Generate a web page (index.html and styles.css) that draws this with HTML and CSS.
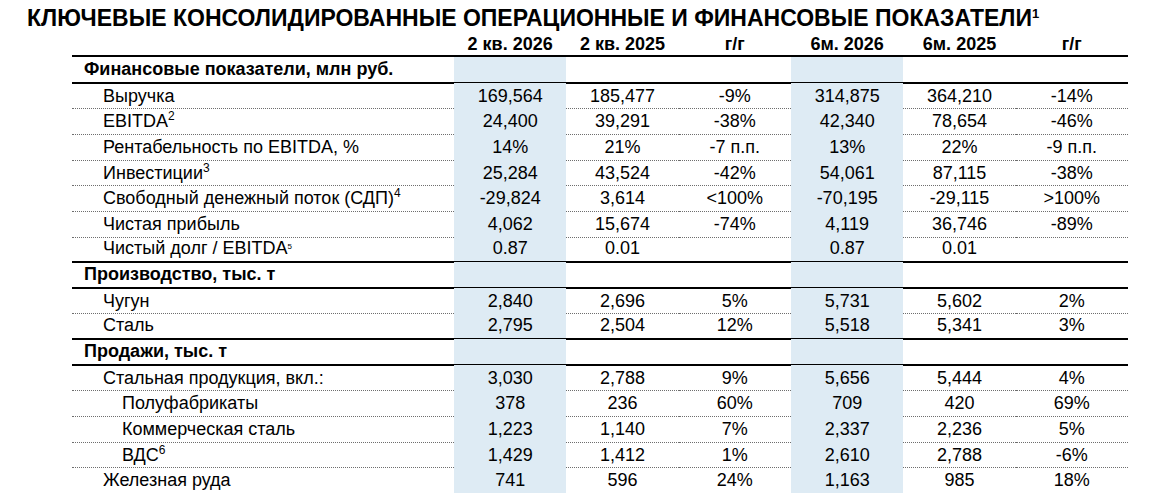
FILE: index.html
```html
<!DOCTYPE html>
<html lang="ru">
<head>
<meta charset="utf-8">
<title>Ключевые показатели</title>
<link rel="stylesheet" href="styles.css">
</head>
<body>
<div class="page">
  <h1 class="title">КЛЮЧЕВЫЕ КОНСОЛИДИРОВАННЫЕ ОПЕРАЦИОННЫЕ И ФИНАНСОВЫЕ ПОКАЗАТЕЛИ<sup class="tsup">1</sup></h1>
  <div class="table">
    <div class="row head">
      <div class="c lab"></div>
      <div class="c">2 кв. 2026</div>
      <div class="c">2 кв. 2025</div>
      <div class="c">г/г</div>
      <div class="c">6м. 2026</div>
      <div class="c">6м. 2025</div>
      <div class="c">г/г</div>
    </div>

    <div class="row sec thick">
      <div class="c lab">Финансовые показатели, млн руб.</div>
      <div class="c hl"></div><div class="c"></div><div class="c"></div>
      <div class="c hl"></div><div class="c"></div><div class="c"></div>
    </div>
    <div class="row">
      <div class="c lab l1">Выручка</div>
      <div class="c hl">169,564</div><div class="c">185,477</div><div class="c">-9%</div>
      <div class="c hl">314,875</div><div class="c">364,210</div><div class="c">-14%</div>
    </div>
    <div class="row">
      <div class="c lab l1">EBITDA<sup>2</sup></div>
      <div class="c hl">24,400</div><div class="c">39,291</div><div class="c">-38%</div>
      <div class="c hl">42,340</div><div class="c">78,654</div><div class="c">-46%</div>
    </div>
    <div class="row">
      <div class="c lab l1">Рентабельность по EBITDA, %</div>
      <div class="c hl">14%</div><div class="c">21%</div><div class="c">-7 п.п.</div>
      <div class="c hl">13%</div><div class="c">22%</div><div class="c">-9 п.п.</div>
    </div>
    <div class="row">
      <div class="c lab l1">Инвестиции<sup>3</sup></div>
      <div class="c hl">25,284</div><div class="c">43,524</div><div class="c">-42%</div>
      <div class="c hl">54,061</div><div class="c">87,115</div><div class="c">-38%</div>
    </div>
    <div class="row">
      <div class="c lab l1">Свободный денежный поток (СДП)<sup>4</sup></div>
      <div class="c hl">-29,824</div><div class="c">3,614</div><div class="c">&lt;100%</div>
      <div class="c hl">-70,195</div><div class="c">-29,115</div><div class="c">&gt;100%</div>
    </div>
    <div class="row">
      <div class="c lab l1">Чистая прибыль</div>
      <div class="c hl">4,062</div><div class="c">15,674</div><div class="c">-74%</div>
      <div class="c hl">4,119</div><div class="c">36,746</div><div class="c">-89%</div>
    </div>
    <div class="row thick">
      <div class="c lab l1">Чистый долг / EBITDA<sup class="tiny">5</sup></div>
      <div class="c hl">0.87</div><div class="c">0.01</div><div class="c"></div>
      <div class="c hl">0.87</div><div class="c">0.01</div><div class="c"></div>
    </div>

    <div class="row sec thick">
      <div class="c lab">Производство, тыс. т</div>
      <div class="c hl"></div><div class="c"></div><div class="c"></div>
      <div class="c hl"></div><div class="c"></div><div class="c"></div>
    </div>
    <div class="row">
      <div class="c lab l1">Чугун</div>
      <div class="c hl">2,840</div><div class="c">2,696</div><div class="c">5%</div>
      <div class="c hl">5,731</div><div class="c">5,602</div><div class="c">2%</div>
    </div>
    <div class="row thick">
      <div class="c lab l1">Сталь</div>
      <div class="c hl">2,795</div><div class="c">2,504</div><div class="c">12%</div>
      <div class="c hl">5,518</div><div class="c">5,341</div><div class="c">3%</div>
    </div>

    <div class="row sec thick">
      <div class="c lab">Продажи, тыс. т</div>
      <div class="c hl"></div><div class="c"></div><div class="c"></div>
      <div class="c hl"></div><div class="c"></div><div class="c"></div>
    </div>
    <div class="row">
      <div class="c lab l1">Стальная продукция, вкл.:</div>
      <div class="c hl">3,030</div><div class="c">2,788</div><div class="c">9%</div>
      <div class="c hl">5,656</div><div class="c">5,444</div><div class="c">4%</div>
    </div>
    <div class="row">
      <div class="c lab l2">Полуфабрикаты</div>
      <div class="c hl">378</div><div class="c">236</div><div class="c">60%</div>
      <div class="c hl">709</div><div class="c">420</div><div class="c">69%</div>
    </div>
    <div class="row">
      <div class="c lab l2">Коммерческая сталь</div>
      <div class="c hl">1,223</div><div class="c">1,140</div><div class="c">7%</div>
      <div class="c hl">2,337</div><div class="c">2,236</div><div class="c">5%</div>
    </div>
    <div class="row">
      <div class="c lab l2">ВДС<sup>6</sup></div>
      <div class="c hl">1,429</div><div class="c">1,412</div><div class="c">1%</div>
      <div class="c hl">2,610</div><div class="c">2,788</div><div class="c">-6%</div>
    </div>
    <div class="row">
      <div class="c lab l1">Железная руда</div>
      <div class="c hl">741</div><div class="c">596</div><div class="c">24%</div>
      <div class="c hl">1,163</div><div class="c">985</div><div class="c">18%</div>
    </div>
  </div>
</div>
</body>
</html>
```

FILE: styles.css
```css
html, body {
  margin: 0;
  padding: 0;
  background: #ffffff;
}

body {
  font-family: "Liberation Sans", Arial, sans-serif;
  color: #000000;
}

.page {
  padding: 6px 0 0 27px;
}

.title {
  margin: 0;
  font-size: 23px;
  font-weight: bold;
  line-height: 24px;
  height: 24px;
  white-space: nowrap;
}

.tsup {
  font-size: 13px;
  vertical-align: 8px;
  line-height: 0;
}

.table {
  margin-left: 45px;
  width: 1056px;
}

.row {
  display: grid;
  grid-template-columns: 382px repeat(6, 1fr);
  height: 25.65px;
  font-size: 18px;
}

.c {
  box-sizing: border-box;
  height: 100%;
  border-bottom: 1px dotted #6e6e6e;
  text-align: center;
  line-height: 24.65px;
  padding-top: 1px;
  white-space: nowrap;
}

.head {
  height: 27px;
}

.head .c {
  font-weight: bold;
  border-bottom: 2px solid #000000;
  line-height: 22px;
  padding-top: 3px;
}

.thick .c {
  border-bottom: 2px solid #000000;
  line-height: 23.65px;
}

.lab {
  text-align: left;
}

.sec .lab {
  font-weight: bold;
  padding-left: 12px;
}

.l1 {
  padding-left: 31px;
}

.l2 {
  padding-left: 50px;
}

.hl {
  background: #deebf4;
}

sup {
  font-size: 12px;
  vertical-align: 7px;
  line-height: 0;
}

sup.tiny {
  font-size: 8px;
  vertical-align: 5px;
}
```
